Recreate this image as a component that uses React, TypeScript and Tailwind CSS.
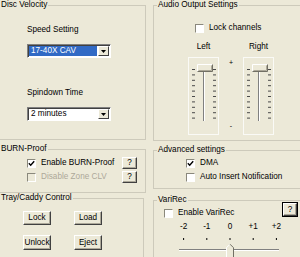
import clsx from "clsx";
import type { ReactNode } from "react";

const Group = ({ title, className, children }: { title: string; className?: string; children?: ReactNode }) => (
  <fieldset className={clsx("min-w-0 shrink-0 border border-[#CDCABB]", className)}>
    <legend className="ml-[3px] px-[1px]">{title}</legend>
    {children}
  </fieldset>
);

const Check = ({ checked, disabled }: { checked?: boolean; disabled?: boolean }) => (
  <span
    className={clsx(
      "flex h-[9px] w-[9px] shrink-0 items-center justify-center border border-t-[#8a887c] border-l-[#8a887c] border-r-white border-b-white",
      disabled ? "bg-[#ECE9D8]" : "bg-white"
    )}
  >
    {checked && (
      <svg width="7" height="7" viewBox="0 0 7 7">
        <path d="M0.8 3.2 L2.7 5.2 L6.2 1.2" stroke="#000" strokeWidth="1.4" fill="none" />
      </svg>
    )}
  </span>
);

const Btn = ({ children, className }: { children: ReactNode; className?: string }) => (
  <button
    type="button"
    className={clsx(
      "flex items-center justify-center border border-t-white border-l-white border-r-[#404040] border-b-[#404040] bg-[#ECE9D8] leading-[10px] shadow-[inset_-1px_-1px_0_#ACA899]",
      className
    )}
  >
    {children}
  </button>
);

const Combo = ({ value, selected }: { value: string; selected?: boolean }) => (
  <div className="flex h-[14px] w-[84px] border border-t-[#808080] border-l-[#808080] border-r-white border-b-white bg-white p-px shadow-[inset_1px_1px_0_#404040]">
    <span className={clsx("flex-1 whitespace-nowrap pl-[2px] leading-[10px]", selected && "bg-[#316AC5] text-white")}>
      {value}
    </span>
    <span className="ml-px flex w-[11px] items-center justify-center border border-t-white border-l-white border-r-[#404040] border-b-[#404040] bg-[#ECE9D8]">
      <svg width="5" height="3" viewBox="0 0 5 3">
        <path d="M0 0H5L2.5 3Z" fill="#000" />
      </svg>
    </span>
  </div>
);

const Fader = () => (
  <svg width="31" height="78" className="mt-[5px] block">
    <rect x="0.5" y="0.5" width="30" height="77" fill="none" stroke="#FAFAF6" />
    {Array.from({ length: 10 }, (_, i) => (
      <g key={i}>
        <rect x="4" y={12 + i * 5.4} width="3" height="1" fill="#4a4a4a" />
        <rect x="25" y={12 + i * 5.4} width="3" height="1" fill="#4a4a4a" />
      </g>
    ))}
    <rect x="15" y="14" width="1" height="50" fill="#808080" />
    <rect x="16" y="14" width="1" height="50" fill="#fff" />
    <rect x="9" y="7" width="16" height="8" fill="#ECE9D8" />
    <path d="M9.5 14.5V7.5H24.5" stroke="#fff" fill="none" />
    <path d="M9.5 14.5H24.5V7.5" stroke="#716F64" fill="none" />
    <path d="M10.5 13.5H23.5V8.5" stroke="#ACA899" fill="none" />
  </svg>
);

const Row = ({ label, checked, disabled }: { label: string; checked?: boolean; disabled?: boolean }) => (
  <span className={clsx("flex items-center gap-[5px] whitespace-nowrap", disabled && "text-[#ACA899]")}>
    <Check checked={checked} disabled={disabled} />
    {label}
  </span>
);

export default function App() {
  return (
    <div className="flex h-[257px] w-[300px] items-start overflow-hidden bg-[#ECE9D8] font-['Liberation_Sans',Arial,sans-serif] text-[8.2px] leading-[10px] text-black">
      <div className="-ml-[4px] flex w-[150px] shrink-0 flex-col">
        <Group title="Disc Velocity" className="h-[140px]">
          <div className="pl-[30px]">
            <p className="mt-[15px]">Speed Setting</p>
            <div className="mt-[9px]">
              <Combo value="17-40X CAV" selected />
            </div>
            <p className="mt-[30px]">Spindown Time</p>
            <div className="mt-[9px]">
              <Combo value="2 minutes" />
            </div>
          </div>
        </Group>

        <Group title="BURN-Proof" className="mt-[4px] h-[49px]">
          <div className="pl-[30px] pr-[8px]">
            <div className="mt-[3px] flex h-[12px] items-center">
              <Row label="Enable BURN-Proof" checked />
              <Btn className="ml-auto h-[12px] w-[15px]">?</Btn>
            </div>
            <div className="mt-[2px] flex h-[12px] items-center">
              <Row label="Disable Zone CLV" disabled />
              <Btn className="ml-auto h-[12px] w-[15px]">?</Btn>
            </div>
          </div>
        </Group>

        <Group title="Tray/Caddy Control" className="h-[80px] w-[148px]">
          <div className="pl-[26px]">
            <div className="mt-[8px] flex gap-[23px]">
              <Btn className="h-[14px] w-[28px]">Lock</Btn>
              <Btn className="h-[14px] w-[28px]">Load</Btn>
            </div>
            <div className="mt-[10px] flex gap-[23px]">
              <Btn className="h-[15px] w-[28px]">Unlock</Btn>
              <Btn className="h-[15px] w-[28px]">Eject</Btn>
            </div>
          </div>
        </Group>
      </div>

      <div className="ml-[7px] flex w-[154px] shrink-0 flex-col">
        <Group title="Audio Output Settings" className="h-[141px]">
          <div className="mt-[13px] flex h-[10px] items-center pl-[41px]">
            <Row label="Lock channels" />
          </div>
          <div className="mt-[9px] flex pl-[34px]">
            <div className="flex w-[31px] flex-col items-center">
              <span>Left</span>
              <Fader />
            </div>
            <div className="flex w-[24px] flex-col items-center text-[7px] leading-[6px]">
              <span className="mt-[18px]">+</span>
              <span className="mt-[57px]">-</span>
            </div>
            <div className="flex w-[31px] flex-col items-center">
              <span>Right</span>
              <Fader />
            </div>
          </div>
        </Group>

        <Group title="Advanced settings" className="mt-[4px] h-[44px]">
          <div className="pl-[32px]">
            <div className="mt-[3px] flex h-[10px] items-center">
              <Row label="DMA" checked />
            </div>
            <div className="mt-[4px] flex h-[10px] items-center">
              <Row label="Auto Insert Notification" />
            </div>
          </div>
        </Group>

        <Group title="VariRec" className="mt-[6px] h-[80px]">
          <div className="-mt-[2px] flex items-start pl-[10px] pr-[9px]">
            <div className="mt-[5px] flex h-[10px] items-center">
              <Row label="Enable VariRec" />
            </div>
            <Btn className="ml-auto h-[13px] w-[14px] outline outline-1 -outline-offset-0 outline-black">?</Btn>
          </div>
          <div className="ml-[18px] mt-[4px] grid w-[116px] grid-cols-5 text-center">
            <span>-2</span>
            <span>-1</span>
            <span>0</span>
            <span>+1</span>
            <span>+2</span>
          </div>
          <svg width="130" height="27" className="ml-[17px] block">
            {[12.6, 35.8, 59, 82.2, 105.4].map((x) => (
              <rect key={x} x={x - 0.5} y="6" width="1" height="2" fill="#000" />
            ))}
            <rect x="8" y="17" width="100" height="1" fill="#808080" />
            <rect x="8" y="18" width="100" height="1" fill="#fff" />
            <path d="M55 15.5L59 11.5L63 15.5V27H55Z" fill="#ECE9D8" />
            <path d="M55.5 27V15.7L59 12.2" stroke="#fff" fill="none" />
            <path d="M59 12.2L62.5 15.7V27" stroke="#716F64" fill="none" />
          </svg>
        </Group>
      </div>
    </div>
  );
}
